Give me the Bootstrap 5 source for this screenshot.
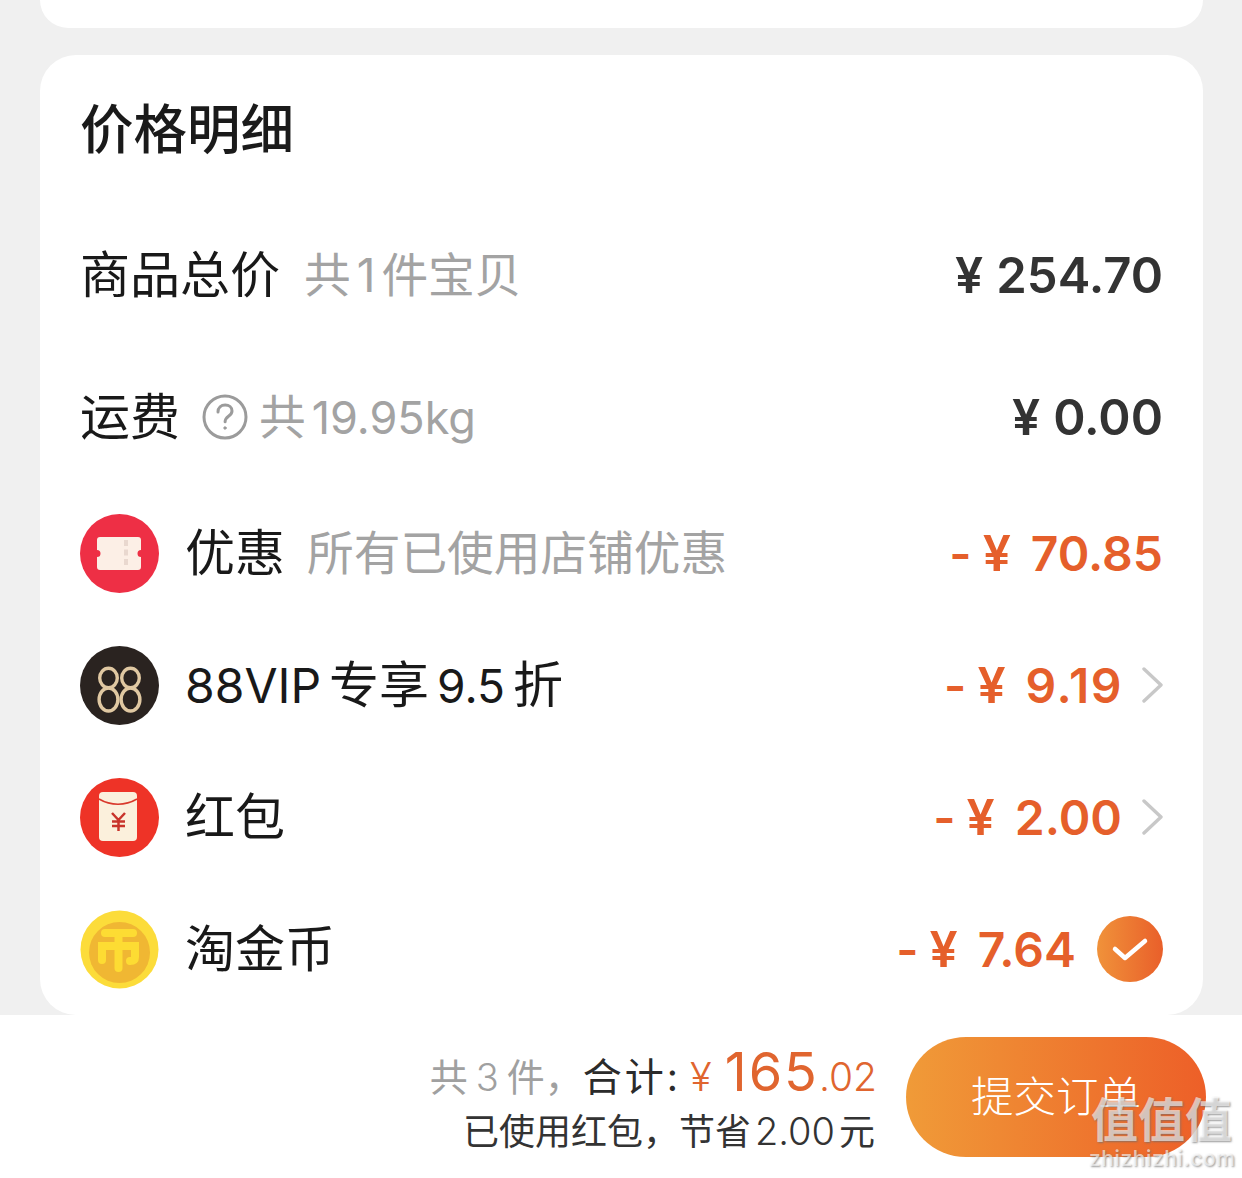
<!DOCTYPE html>
<html lang="zh-CN">
<head>
  <meta charset="UTF-8">
  <title>价格明细</title>
  <link href="https://cdn.jsdelivr.net/npm/bootstrap@5.3.2/dist/css/bootstrap.min.css" rel="stylesheet">
  <style>
    html, body { height: 100%; }
    body {
      background: #f0f0f0;
      width: 1242px;
      height: 1178px;
      overflow: hidden;
      position: relative;
      color: #191919;
      font-family: "Inter", "Noto Sans CJK SC", sans-serif;
    }
    .top-stub { height: 28px; margin: 0 39px 27px 40px; background: #fff; border-radius: 0 0 34px 34px; }
    .price-card { height: 960px; margin: 0 39px 0 40px; background: #fff; border-radius: 36px; padding: 0 40px; overflow: hidden; }
    .price-title { font-size: 53.5px; font-weight: 500; line-height: 70px; padding-top: 40px; height: 141px; margin: 0; color: #1a1a1a; }
    .line-row { display: flex; align-items: center; }
    .h-142 { height: 142px; }
    .h-132 { height: 132px; }
    .row-first { margin-top: 8px; }
    .row-second { margin-bottom: -1px; }
    .row-name { font-size: 50px; font-weight: 400; line-height: 1; }
    .row-note { font-size: 46.7px; font-weight: 400; color: #a3a3a3; line-height: 1; margin-left: 22px; }
    .row-note.first-note { margin-left: 24px; }
    .row-amount { margin-left: auto; font-size: 49px; font-weight: 600; color: #333; line-height: 1; white-space: nowrap; }
    .row-amount.minus { color: #e55f2b; font-size: 48px; }
    .yen { margin-right: 13px; font-size: 50px; }
    .minus .yen { margin-right: 20px; }
    .dash { margin-right: 11px; }
    .wide-digits { letter-spacing: 1.5px; }
    .note-num { margin: 0 6px; font-size: 46px; }
    .note-weight { margin: 0 4px 0 6px; font-size: 45px; }
    .name-num { font-size: 48px; margin-right: 8px; }
    .name-num2 { font-size: 46px; margin: 0 8px; }
    .round-icon { width: 79px; height: 79px; flex: none; margin-right: 26px; display: block; }
    .arrow-icon { width: 22px; height: 36px; flex: none; margin-left: 18px; }
    .arrow-wide { margin-left: 19px; }
    .check-icon { width: 66px; height: 66px; flex: none; margin-left: 21px; }
    .help-icon { width: 46px; height: 46px; flex: none; margin-left: 22px; margin-right: 11px; }
    .bottom-bar { height: 163px; background: #fff; padding: 22px 36px 21px 0; display: flex; justify-content: flex-end; align-items: flex-start; }
    .total-box { text-align: right; margin-right: 31px; white-space: nowrap; }
    .total-line { height: 70px; display: flex; align-items: baseline; justify-content: flex-end; line-height: 70px; }
    .total-gray { font-size: 38px; color: #a0a0a0; }
    .total-num { margin: 0 8px; font-weight: 300; }
    .total-label { font-size: 39px; color: #2b2b2b; letter-spacing: 3px; }
    .total-orange { color: #e0652f; }
    .total-yen { font-size: 40px; font-weight: 300; margin-left: 9px; margin-right: 13px; }
    .total-big { font-size: 54px; font-weight: 400; letter-spacing: 2px; }
    .total-small { font-size: 39px; font-weight: 300; margin-right: -2px; }
    .total-note { font-size: 36px; color: #333; line-height: 48px; }
    .note-figure { font-size: 38px; font-weight: 300; margin: 0 4px; }
    .submit-btn {
      width: 300px; height: 120px; border: 0; border-radius: 60px; flex: none;
      background: linear-gradient(90deg, #f09b38, #ed5f28);
      color: #fff; font-size: 42.5px; font-weight: 300; padding: 0;
    }
    .wm { position: absolute; right: 8px; top: 1096px; width: 145px; text-align: center; color: rgba(255,255,255,.62); text-shadow: 1px 1px 2px rgba(110,110,110,.7); line-height: 1; pointer-events: none; }
    .wm-top { font-size: 47px; font-weight: 700; white-space: nowrap; }
    .wm-bot { font-size: 21px; font-weight: 500; margin-top: 5px; letter-spacing: .6px; }
  </style>
</head>
<body>
  <div class="top-stub"></div>

  <div class="price-card">
    <h1 class="price-title">价格明细</h1>

    <!-- 商品总价 / 运费 -->
    <div class="line-row h-142 row-first">
      <span class="row-name">商品总价</span>
      <span class="row-note first-note">共<span class="note-num">1</span>件宝贝</span>
      <span class="row-amount"><span class="yen">¥</span>254.70</span>
    </div>
    <div class="line-row h-142 row-second">
      <span class="row-name">运费</span>
      <svg class="help-icon" viewBox="0 0 46 46" fill="none" stroke="#9b9b9b" stroke-width="3" stroke-linecap="round">
        <circle cx="23" cy="23" r="21"/>
        <path d="M16 18c0-4.400 3.200-7 7.200-7 3.900 0 6.800 2.400 6.800 5.900 0 2.600-1.500 3.900-3.500 5.400-2.300 1.700-3.400 2.800-3.400 5.500"/>
        <circle cx="23" cy="34" r="1.200" fill="#9b9b9b" stroke-width="1"/>
      </svg>
      <span class="row-note ms-0">共<span class="note-weight">19.95kg</span></span>
      <span class="row-amount"><span class="yen">¥</span>0.00</span>
    </div>

    <!-- 优惠 -->
    <div class="line-row h-132">
      <svg class="round-icon" viewBox="0 0 79 79">
        <circle cx="39.500" cy="39.500" r="39.500" fill="#ee2f45"/>
        <path d="M20 23h38a3 3 0 0 1 3 3v10a3.500 3.500 0 0 0 0 7v10a3 3 0 0 1-3 3H20a3 3 0 0 1-3-3V43a3.500 3.500 0 0 0 0-7V26a3 3 0 0 1 3-3z" fill="#fcefe6"/>
        <path d="M46 26v28" stroke="#e9d8cf" stroke-width="4" stroke-dasharray="6 3.500"/>
      </svg>
      <span class="row-name">优惠</span>
      <span class="row-note">所有已使用店铺优惠</span>
      <span class="row-amount minus"><span class="dash">-</span><span class="yen">¥</span>70.85</span>
    </div>

    <!-- 88VIP -->
    <div class="line-row h-132">
      <svg class="round-icon" viewBox="0 0 79 79">
        <circle cx="39.500" cy="39.500" r="39.500" fill="#2a2320"/>
        <g fill="none" stroke="#e0c8a2" stroke-width="3.400">
          <ellipse cx="28.500" cy="32" rx="8.800" ry="9.800"/>
          <ellipse cx="28.500" cy="53.500" rx="9.400" ry="11.500"/>
          <ellipse cx="50.500" cy="32" rx="8.800" ry="9.800"/>
          <ellipse cx="50.500" cy="53.500" rx="9.400" ry="11.500"/>
        </g>
      </svg>
      <span class="row-name"><span class="name-num">88VIP</span>专享<span class="name-num2">9.5</span>折</span>
      <span class="row-amount minus"><span class="dash">-</span><span class="yen">¥</span><span class="wide-digits">9.19</span></span>
      <svg class="arrow-icon" viewBox="0 0 22 36" fill="none" stroke="#c8c8c8" stroke-width="3.400" stroke-linecap="round" stroke-linejoin="round">
        <path d="M3 2l17 16L3 34"/>
      </svg>
    </div>

    <!-- 红包 -->
    <div class="line-row h-132">
      <svg class="round-icon" viewBox="0 0 79 79">
        <circle cx="39.500" cy="39.500" r="39.500" fill="#ee3327"/>
        <rect x="19" y="14" width="38" height="49" rx="4" fill="#fbf0dc"/>
        <path d="M19 21c12 7 26 7 38 0" fill="none" stroke="#d9392c" stroke-width="1.500"/>
        <path d="M32 35l6.500 7 6.500-7M38.500 42v11M32 43.500h13M32 48h13" fill="none" stroke="#c8342b" stroke-width="2.500"/>
      </svg>
      <span class="row-name">红包</span>
      <span class="row-amount minus"><span class="dash">-</span><span class="yen">¥</span>2.00</span>
      <svg class="arrow-icon arrow-wide" viewBox="0 0 22 36" fill="none" stroke="#c8c8c8" stroke-width="3.400" stroke-linecap="round" stroke-linejoin="round">
        <path d="M3 2l17 16L3 34"/>
      </svg>
    </div>

    <!-- 淘金币 -->
    <div class="line-row h-132">
      <svg class="round-icon" viewBox="0 0 79 79">
        <circle cx="39.500" cy="39.500" r="39" fill="#fcdc3a"/>
        <circle cx="39.500" cy="42.500" r="30.500" fill="#f0b733"/>
        <g fill="none" stroke="#fddc33" stroke-width="8" stroke-linecap="round">
          <path d="M25 23h28"/>
          <path d="M38.500 27v31"/>
          <path d="M22 50V36h33v11c0 3-2 4-5 4"/>
        </g>
      </svg>
      <span class="row-name">淘金币</span>
      <span class="row-amount minus"><span class="dash">-</span><span class="yen">¥</span>7.64</span>
      <svg class="check-icon" viewBox="0 0 66 66">
        <defs>
          <linearGradient id="checkGrad" x1="0" x2="1" y1="0" y2="0">
            <stop offset="0" stop-color="#f0923a"/>
            <stop offset="1" stop-color="#e95f2a"/>
          </linearGradient>
        </defs>
        <circle cx="33" cy="33" r="33" fill="url(#checkGrad)"/>
        <path d="M18 33l10 9 20-17" fill="none" stroke="#fff" stroke-width="4.500" stroke-linecap="round" stroke-linejoin="round"/>
      </svg>
    </div>
  </div>

  <!-- 底部合计 -->
  <div class="bottom-bar">
    <div class="total-box">
      <div class="total-line">
        <span class="total-gray">共<span class="total-num">3</span>件，</span>
        <span class="total-label">合计:</span>
        <span class="total-orange total-yen">¥</span>
        <span class="total-orange total-big">165</span>
        <span class="total-orange total-small">.02</span>
      </div>
      <div class="total-note">已使用红包，节省<span class="note-figure">2.00</span>元</div>
    </div>
    <button class="submit-btn" type="button">提交订单</button>
  </div>

  <div class="wm">
    <div class="wm-top">值值值</div>
    <div class="wm-bot">zhizhizhi.com</div>
  </div>
</body>
</html>
